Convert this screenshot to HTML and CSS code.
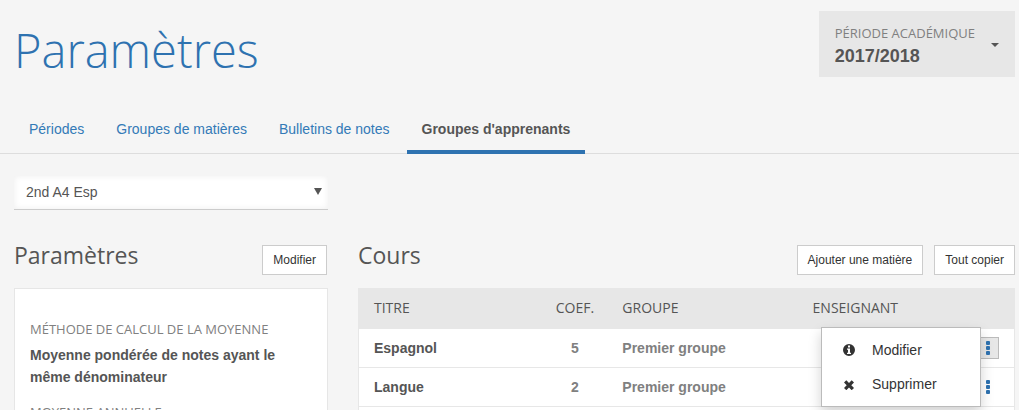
FILE: index.html
```html
<!DOCTYPE html>
<html lang="fr">
<head>
<meta charset="utf-8">
<meta name="viewport" content="width=device-width, initial-scale=1">
<title>Paramètres</title>
<link rel="stylesheet" href="styles.css">
</head>
<body>
<div class="page">
  <header class="page-header">
    <h1 class="page-title">Paramètres</h1>
    <button type="button" class="period">
      <span class="period-text">
        <span class="label">Période académique</span>
        <strong class="period-value">2017/2018</strong>
      </span>
      <span class="caret"></span>
    </button>
  </header>

  <nav class="tabs">
    <a class="tab" href="#periodes">Périodes</a>
    <a class="tab" href="#matieres">Groupes de matières</a>
    <a class="tab" href="#bulletins">Bulletins de notes</a>
    <a class="tab active" href="#apprenants" aria-current="page">Groupes d'apprenants</a>
  </nav>

  <main class="content">
    <div class="select-wrap">
      <select class="select" aria-label="Groupe d'apprenants">
        <option>2nd A4 Esp</option>
      </select>
    </div>

    <div class="columns">
      <section>
        <div class="section-head">
          <h2 class="section-title">Paramètres</h2>
          <button type="button" class="btn">Modifier</button>
        </div>
        <dl class="card">
          <dt class="label">Méthode de calcul de la moyenne</dt>
          <dd class="card-value">Moyenne pondérée de notes ayant le même dénominateur</dd>
          <dt class="label">Moyenne annuelle</dt>
        </dl>
      </section>

      <section>
        <div class="section-head">
          <h2 class="section-title">Cours</h2>
          <div class="actions">
            <button type="button" class="btn">Ajouter une matière</button>
            <button type="button" class="btn">Tout copier</button>
          </div>
        </div>
        <table class="courses">
          <colgroup>
            <col class="col-title"><col class="col-coef"><col class="col-group"><col class="col-teacher"><col class="col-menu">
          </colgroup>
          <thead>
            <tr><th>Titre</th><th class="center">Coef.</th><th>Groupe</th><th>Enseignant</th><th></th></tr>
          </thead>
          <tbody>
            <tr>
              <td class="name">Espagnol</td><td class="center">5</td><td>Premier groupe</td><td></td>
              <td class="menu-cell">
                <div class="menu-anchor">
                  <button type="button" class="more open" aria-label="Actions pour Espagnol" aria-expanded="true">
                    <svg width="4" height="14" viewBox="0 0 4 14"><rect width="4" height="4" rx="1"/><rect y="5" width="4" height="4" rx="1"/><rect y="10" width="4" height="4" rx="1"/></svg>
                  </button>
                  <div class="menu">
                    <button type="button" class="menu-item">
                      <svg width="12" height="12" viewBox="0 0 12 12"><path fill-rule="evenodd" d="M6 0a6 6 0 1 1 0 12A6 6 0 0 1 6 0zM5 1.500v2h2v-2zM4 4.500v1.300h1V8.700H4V10h4V8.700H7V4.500z"/></svg>
                      Modifier
                    </button>
                    <button type="button" class="menu-item">
                      <svg width="12" height="12" viewBox="0 0 12 12"><path d="M3.300 2.200 6 4.900 8.700 2.200l2.300 2.300L8.300 7.200 11 9.900l-2.300 2.300L6 9.500l-2.700 2.700L1 9.900l2.700-2.700L1 4.500z"/></svg>
                      Supprimer
                    </button>
                  </div>
                </div>
              </td>
            </tr>
            <tr>
              <td class="name">Langue</td><td class="center">2</td><td>Premier groupe</td><td></td>
              <td class="menu-cell">
                <button type="button" class="more" aria-label="Actions pour Langue">
                  <svg width="4" height="14" viewBox="0 0 4 14"><rect width="4" height="4" rx="1"/><rect y="5" width="4" height="4" rx="1"/><rect y="10" width="4" height="4" rx="1"/></svg>
                </button>
              </td>
            </tr>
            <tr><td colspan="5"></td></tr>
          </tbody>
        </table>
      </section>
    </div>
  </main>
</div>
</body>
</html>
```

FILE: styles.css
```css
* { box-sizing: border-box; }

body {
  margin: 0;
  background: #f5f5f5;
  color: #555;
  font: 14px/20px "Liberation Sans", Arial, sans-serif;
}

button { font: inherit; color: inherit; cursor: pointer; }

.page { height: 100vh; overflow: hidden; }

.page-header {
  display: flex;
  justify-content: space-between;
  align-items: flex-start;
  padding: 11px 4px 0 14px;
}

.page-title {
  margin: 0;
  padding-top: 12px;
  color: #2e72b0;
  font: 300 47px/54px "Open Sans", sans-serif;
}

.period {
  display: flex;
  align-items: center;
  gap: 16px;
  padding: 11px 16px 9px;
  border: 0;
  background: #e7e7e7;
  text-align: left;
}

.period-text { display: flex; flex-direction: column; }

.label {
  color: #808080;
  font: 400 13px/22px "Open Sans", sans-serif;
  text-transform: uppercase;
}

.period-value { font-size: 18px; line-height: 24px; }

.caret {
  border: 4px solid transparent;
  border-top-color: #555;
  border-bottom: 0;
}

.tabs {
  display: flex;
  gap: 2px;
  margin-top: 32px;
  padding-left: 14px;
  border-bottom: 1px solid #ddd;
}

.tab {
  margin-bottom: -1px;
  padding: 10px 15px 11px;
  border-bottom: 4px solid transparent;
  color: #337ab7;
  text-decoration: none;
}

.tab.active { border-bottom-color: #2e72b0; color: #555; font-weight: 700; }

.content { padding: 22px 4px 0 14px; }

.select-wrap { position: relative; width: 314px; }

.select-wrap::after {
  content: "";
  position: absolute;
  top: 12px;
  right: 6px;
  border: 4px solid transparent;
  border-top: 7px solid #555;
  border-bottom: 0;
  pointer-events: none;
}

.select {
  display: block;
  width: 100%;
  height: 34px;
  padding: 0 24px 2px 12px;
  border: 0;
  border-bottom: 1px solid #ccc;
  border-radius: 0;
  background: #fff;
  box-shadow: inset 0 0 6px #eee;
  appearance: none;
  color: #555;
  font: inherit;
}

.columns {
  display: grid;
  grid-template-columns: 314px minmax(0, 1fr);
  gap: 30px;
  padding-top: 29px;
}

.section-head {
  display: flex;
  justify-content: space-between;
  padding: 0 1px 13px 0;
}

.columns > :last-child .section-head { padding-right: 0; }

.section-title {
  margin: 0;
  font: 400 23px/32px "Open Sans", sans-serif;
}

.actions { display: flex; gap: 11px; }

.btn {
  height: 30px;
  margin-top: 6px;
  padding: 0 10px;
  border: 1px solid #ccc;
  background: #fff;
  color: #333;
  font-size: 12px;
}

.card {
  margin: 0;
  padding: 29px 15px;
  border: 1px solid #e6e6e6;
  background: #fff;
}

.card-value { margin: 4px 0 13px; font-weight: 700; line-height: 22px; }

.courses {
  width: 100%;
  table-layout: fixed;
  border-collapse: collapse;
  border: 1px solid #e7e7e7;
  background: #fff;
}

.col-title { width: 27%; }
.col-coef { width: 12%; }
.col-group { width: 29%; }
.col-menu { width: 48px; }

.courses th {
  height: 40px;
  padding: 0 8px 2px;
  background: #e7e7e7;
  font: 400 14px/20px "Open Sans", sans-serif;
  text-align: left;
  text-transform: uppercase;
}

.courses td {
  height: 39px;
  padding: 0 8px;
  border-bottom: 1px solid #e7e7e7;
  color: #808080;
  font-weight: 700;
}

.courses th:first-child, .courses td:first-child { padding-left: 15px; }
.courses .name { color: #555; }
.courses .center { text-align: center; }
.courses .menu-cell { padding: 0 15px 0 8px; }

.menu-anchor { position: relative; }

.more {
  display: flex;
  align-items: center;
  justify-content: center;
  width: 22px;
  height: 22px;
  margin-left: auto;
  padding: 0;
  border: 1px solid transparent;
  background: none;
  fill: #2e72b0;
}

.more.open { border-color: #bbb; background: #e7e7e7; }

.menu {
  position: absolute;
  top: -10px;
  right: 18px;
  width: 160px;
  padding: 5px 0;
  border: 1px solid #bbb;
  background: #fff;
  box-shadow: 0 6px 12px rgba(0, 0, 0, 0.18);
}

.menu-item {
  display: flex;
  align-items: center;
  gap: 17px;
  width: 100%;
  height: 34px;
  padding: 0 21px;
  border: 0;
  background: none;
  color: #333;
  fill: #333;
  font-weight: 400;
}
```
